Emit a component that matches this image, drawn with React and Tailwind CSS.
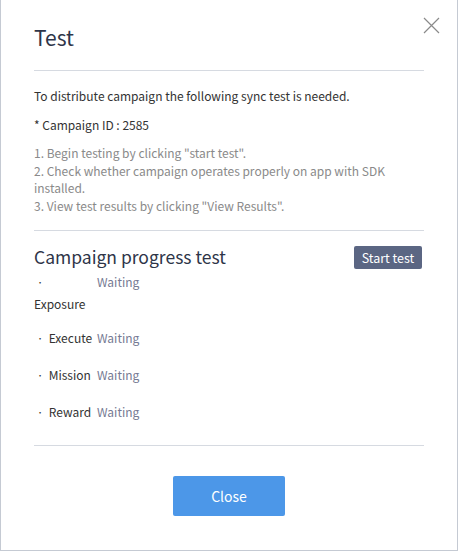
import React from "react";

const font = { fontFamily: '"Noto Sans CJK KR", "Noto Sans", sans-serif' };

function Row({ label, className = "" }) {
  return (
    <div className={`flex items-start leading-[22px] text-[12px] ${className}`}>
      <div className="w-[63px] text-[#333]">
        <span className="inline-block w-[12px] text-center">·</span> {label}
      </div>
      <div className="text-[#767a93]">Waiting</div>
    </div>
  );
}

export default function App() {
  return (
    <div
      className="relative w-[458px] h-[551px] bg-white border-l border-r border-b border-[#c5cad3] box-border"
      style={font}
    >
      <button className="absolute right-[17px] top-[17px] w-[17px] h-[17px] text-[#8a8a8a]">
        <svg width="17" height="17" viewBox="0 0 17 17" fill="none" stroke="currentColor" strokeWidth="1.2">
          <path d="M1 1L16 16M16 1L1 16" />
        </svg>
      </button>
      <div className="px-[33px] flex flex-col">
        <div className="pt-[22px] pb-[3px] text-[21px] leading-[30px] text-[#2e3548]">Test</div>
        <div className="mt-[15px] h-px bg-[#d6dae1]" />
        <div className="mt-[15px] text-[12px] leading-[20px] text-[#333]">
          To distribute campaign the following sync test is needed.
        </div>
        <div className="mt-[9px] text-[12px] leading-[20px] text-[#333]">* Campaign ID : 2585</div>
        <div className="mt-[9px] text-[12px] leading-[17.6px] text-[#8a8a8a]">
          <div>1. Begin testing by clicking "start test".</div>
          <div>2. Check whether campaign operates properly on app with SDK installed.</div>
          <div>3. View test results by clicking "View Results".</div>
        </div>
        <div className="mt-[16px] h-px bg-[#d6dae1]" />
        <div className="mt-[14px] h-[24px] flex items-center justify-between">
          <div className="text-[17.5px] text-[#2e3548]">Campaign progress test</div>
          <button className="h-[23px] w-[68px] rounded-[2px] bg-[#5b6683] text-white text-[12.5px] leading-[23px] mr-[2px]">
            Start test
          </button>
        </div>
        <Row label="Exposure" className="mt-[2px]" />
        <Row label="Execute" className="mt-[12px]" />
        <Row label="Mission" className="mt-[15px]" />
        <Row label="Reward" className="mt-[15px]" />
        <div className="mt-[22px] h-px bg-[#d6dae1]" />
        <div className="mt-[30px] flex justify-center">
          <button className="w-[112px] h-[40px] rounded-[2px] bg-[#4c97e8] text-white text-[14px]">
            Close
          </button>
        </div>
      </div>
    </div>
  );
}
